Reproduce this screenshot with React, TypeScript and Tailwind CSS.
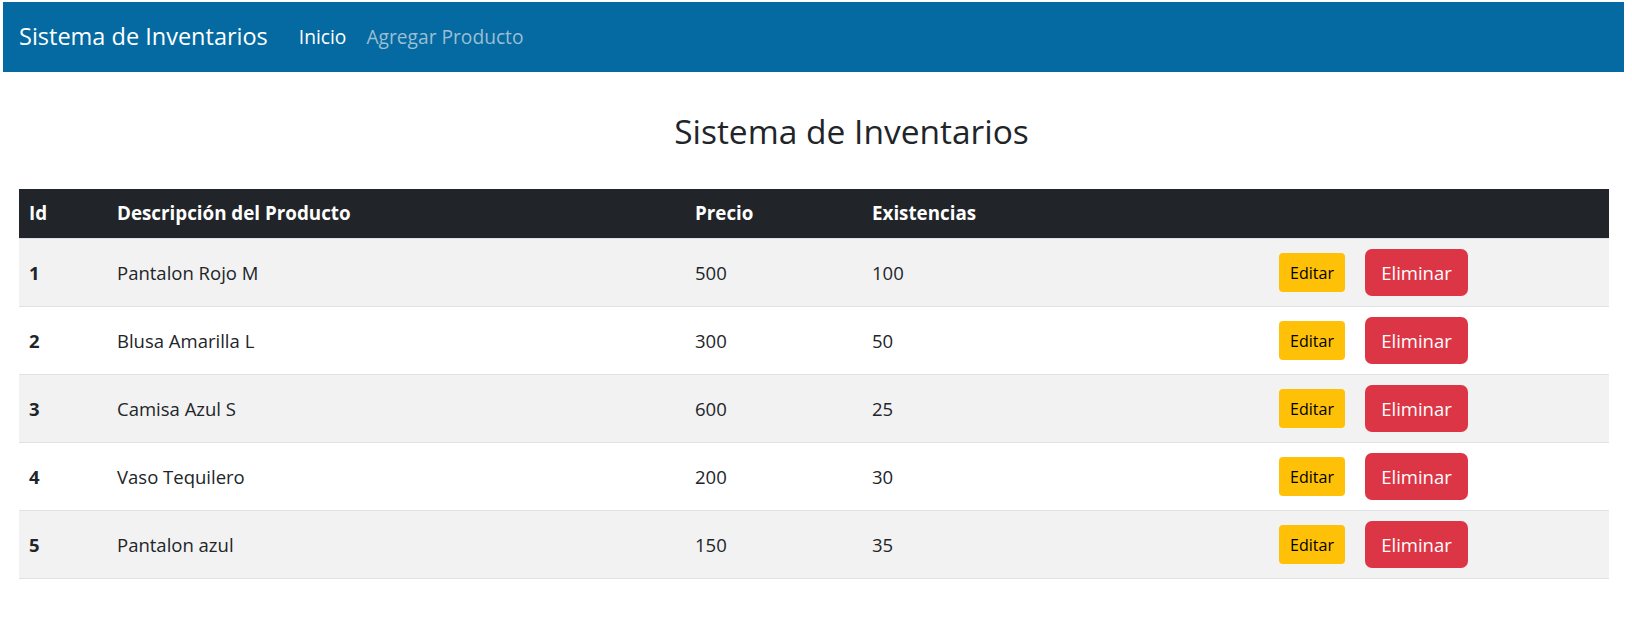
import React from "react";

const rows = [
  { id: 1, desc: "Pantalon Rojo M", precio: 500, exist: 100 },
  { id: 2, desc: "Blusa Amarilla L", precio: 300, exist: 50 },
  { id: 3, desc: "Camisa Azul S", precio: 600, exist: 25 },
  { id: 4, desc: "Vaso Tequilero", precio: 200, exist: 30 },
  { id: 5, desc: "Pantalon azul", precio: 150, exist: 35 },
];

export default function App() {
  return (
    <div className="min-h-[626px] bg-white text-[#212529] font-['Open_Sans',sans-serif]">
      <div className="pt-[2px] pl-[3px] pr-[8px]">
        <nav className="h-[70px] bg-[#046aa1] flex items-center pl-[16px]">
          <span className="text-white text-[23.5px] mr-[31px]">Sistema de Inventarios</span>
          <span className="text-white text-[19.2px] mr-[20px]">Inicio</span>
          <span className="text-[#9bbfd3] text-[19.2px]">Agregar Producto</span>
        </nav>
      </div>
      <div className="h-[117px] flex items-center justify-center pl-[71px] pt-[2px]">
        <h2 className="text-[33.5px] leading-[1.2] font-medium">Sistema de Inventarios</h2>
      </div>
      <div className="mx-[19px] w-[1590px] text-[18.5px]">
        <div className="grid grid-cols-[88px_578px_177px_407px_340px] h-[50px] items-center bg-[#212529] text-white font-bold text-[18.8px] border-b border-[#dee2e6]">
          <div className="px-[10px]">Id</div>
          <div className="px-[10px]">Descripción del Producto</div>
          <div className="px-[10px]">Precio</div>
          <div className="px-[10px]">Existencias</div>
          <div className="px-[10px]"></div>
        </div>
        {rows.map((r, i) => (
          <div
            key={r.id}
            className={`grid grid-cols-[88px_578px_177px_407px_340px] h-[68px] items-center border-b border-[#dee2e6] ${
              i % 2 === 0 ? "bg-[#f2f2f2]" : "bg-white"
            }`}
          >
            <div className="px-[10px] font-bold">{r.id}</div>
            <div className="px-[10px]">{r.desc}</div>
            <div className="px-[10px]">{r.precio}</div>
            <div className="px-[10px]">{r.exist}</div>
            <div className="px-[10px] flex items-center gap-[20px]">
              <button className="w-[66px] h-[39px] rounded-[4px] bg-[#ffc107] text-black text-[16px] flex items-center justify-center">
                Editar
              </button>
              <button className="w-[103px] h-[47px] rounded-[7px] bg-[#dc3545] text-white text-[18.5px] flex items-center justify-center">
                Eliminar
              </button>
            </div>
          </div>
        ))}
      </div>
    </div>
  );
}
